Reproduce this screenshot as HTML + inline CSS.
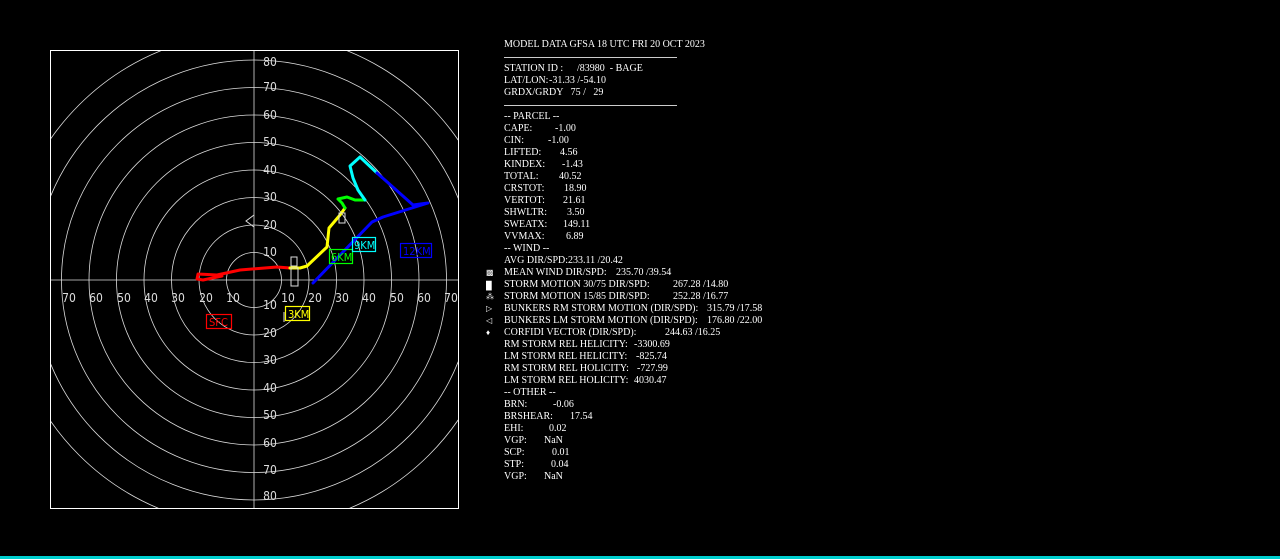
<!DOCTYPE html>
<html><head><meta charset="utf-8"><style>
body{margin:0;background:#000;width:1280px;height:559px;overflow:hidden;position:relative}
.t{position:absolute;font:10px/12px "Liberation Serif",serif;color:#fff;white-space:pre}
.bar{position:absolute;left:0;top:556px;width:1280px;height:3px;background:#00d0d0}
</style></head><body>
<svg width="1280" height="559" style="position:absolute;left:0;top:0">
<defs><clipPath id="c"><rect x="51" y="51" width="407" height="457"/></clipPath></defs>
<rect x="50.5" y="50.5" width="408" height="458" fill="none" stroke="#fff"/>
<g clip-path="url(#c)" fill="none" stroke="#ddd" stroke-width="0.8">
<circle cx="254" cy="280" r="27.5"/><circle cx="254" cy="280" r="55"/><circle cx="254" cy="280" r="82.5"/><circle cx="254" cy="280" r="110"/><circle cx="254" cy="280" r="137.5"/><circle cx="254" cy="280" r="165"/><circle cx="254" cy="280" r="192.5"/><circle cx="254" cy="280" r="220"/><circle cx="254" cy="280" r="247.5"/>
<line x1="254" y1="50" x2="254" y2="509"/><line x1="50" y1="280" x2="459" y2="280"/>
</g>
<g font-family="DejaVu Sans Condensed,Liberation Sans,sans-serif" font-size="12" fill="#ddd" text-anchor="middle">
<text x="69" y="302">70</text><text x="96" y="302">60</text><text x="124" y="302">50</text><text x="151" y="302">40</text><text x="178" y="302">30</text><text x="206" y="302">20</text><text x="233" y="302">10</text>
<text x="288" y="302">10</text><text x="315" y="302">20</text><text x="342" y="302">30</text><text x="369" y="302">40</text><text x="397" y="302">50</text><text x="424" y="302">60</text><text x="451" y="302">70</text>
<text x="270" y="256">10</text><text x="270" y="229">20</text><text x="270" y="201">30</text><text x="270" y="174">40</text><text x="270" y="146">50</text><text x="270" y="119">60</text><text x="270" y="91">70</text><text x="270" y="66">80</text>
<text x="270" y="309">10</text><text x="270" y="337">20</text><text x="270" y="364">30</text><text x="270" y="392">40</text><text x="270" y="419">50</text><text x="270" y="447">60</text><text x="270" y="474">70</text><text x="270" y="500">80</text>
</g>
<g fill="none" stroke-width="3" stroke-linejoin="round" stroke-linecap="round">
<polyline stroke="#f00" points="290,268 277,267 240,270 217,275 198,274 197,279 203,280 222,276"/>
<polyline stroke="#ff0" points="290,268 300,268 307,266 327,247 329,228 340,215 345,208"/>
<polyline stroke="#0f0" points="345,208 342,203 338,199 347,197 355,200 365,200"/>
<polyline stroke="#0ff" points="365,200 358,190 353,178 350,166 360,157 377,173"/>
<polyline stroke="#00f" points="377,173 413,205 428,203 383,217 372,222 313,283"/>
</g>
<g fill="none" stroke-width="1.2" font-family="DejaVu Sans Condensed,Liberation Sans,sans-serif" font-size="11">
<rect x="206.5" y="314.5" width="25" height="14" stroke="#f00"/><text x="209" y="326" fill="#f00" stroke="none">SFC</text>
<rect x="285.5" y="306.5" width="24" height="14" stroke="#ff0"/><text x="288" y="318" fill="#ff0" stroke="none">3KM</text>
<rect x="329.5" y="249.5" width="23" height="14" stroke="#0f0"/><text x="331" y="261" fill="#0f0" stroke="none">6KM</text>
<rect x="352.5" y="237.5" width="23" height="14" stroke="#0ff"/><text x="354" y="249" fill="#0ff" stroke="none">9KM</text>
<rect x="400.5" y="243.5" width="31" height="14" stroke="#00f"/><text x="403" y="255" fill="#00f" stroke="none">12KM</text>
</g>
<g fill="none" stroke="#ddd" stroke-width="1">
<rect x="291" y="268" width="7" height="18"/><rect x="291" y="257" width="6" height="9"/><rect x="339" y="213" width="6" height="10"/>
<path d="M254 215 L246 221 L254 227"/><path d="M284 312 L284 322"/>
</g>
</svg>
<div style="position:absolute;left:0;top:3px;width:1280px;height:540px">
<div class="t" style="left:504px;top:36px">MODEL DATA GFSA 18 UTC FRI 20 OCT 2023</div>
<div style="position:absolute;left:504px;top:54px;width:173px;height:1px;background:#ccc"></div>
<div class="t" style="left:504px;top:60px">STATION ID :</div><div class="t" style="left:577px;top:60px">/83980  - BAGE</div>
<div class="t" style="left:504px;top:72px">LAT/LON:</div><div class="t" style="left:549px;top:72px">-31.33 /-54.10</div>
<div class="t" style="left:504px;top:84px">GRDX/GRDY   75 /   29</div>
<div style="position:absolute;left:504px;top:102px;width:173px;height:1px;background:#ccc"></div>
<div class="t" style="left:504px;top:108px">-- PARCEL --</div>
<div class="t" style="left:504px;top:120px">CAPE:</div><div class="t" style="left:555px;top:120px">-1.00</div>
<div class="t" style="left:504px;top:132px">CIN:</div><div class="t" style="left:548px;top:132px">-1.00</div>
<div class="t" style="left:504px;top:144px">LIFTED:</div><div class="t" style="left:560px;top:144px">4.56</div>
<div class="t" style="left:504px;top:156px">KINDEX:</div><div class="t" style="left:562px;top:156px">-1.43</div>
<div class="t" style="left:504px;top:168px">TOTAL:</div><div class="t" style="left:559px;top:168px">40.52</div>
<div class="t" style="left:504px;top:180px">CRSTOT:</div><div class="t" style="left:564px;top:180px">18.90</div>
<div class="t" style="left:504px;top:192px">VERTOT:</div><div class="t" style="left:563px;top:192px">21.61</div>
<div class="t" style="left:504px;top:204px">SHWLTR:</div><div class="t" style="left:567px;top:204px">3.50</div>
<div class="t" style="left:504px;top:216px">SWEATX:</div><div class="t" style="left:563px;top:216px">149.11</div>
<div class="t" style="left:504px;top:228px">VVMAX:</div><div class="t" style="left:566px;top:228px">6.89</div>
<div class="t" style="left:504px;top:240px">-- WIND --</div>
<div class="t" style="left:504px;top:252px">AVG DIR/SPD:</div><div class="t" style="left:568px;top:252px">233.11 /20.42</div>
<div class="t" style="left:486px;top:264px;font-size:8px">&#9641;</div><div class="t" style="left:504px;top:264px">MEAN WIND DIR/SPD:</div><div class="t" style="left:616px;top:264px">235.70 /39.54</div>
<div class="t" style="left:486px;top:264px;font-size:8px;top:277px">&#9608;</div><div class="t" style="left:504px;top:276px">STORM MOTION 30/75 DIR/SPD:</div><div class="t" style="left:673px;top:276px">267.28 /14.80</div>
<div class="t" style="left:486px;top:288px;font-size:8px">&#8258;</div><div class="t" style="left:504px;top:288px">STORM MOTION 15/85 DIR/SPD:</div><div class="t" style="left:673px;top:288px">252.28 /16.77</div>
<div class="t" style="left:486px;top:300px;font-size:8px">&#9655;</div><div class="t" style="left:504px;top:300px">BUNKERS RM STORM MOTION (DIR/SPD):</div><div class="t" style="left:707px;top:300px">315.79 /17.58</div>
<div class="t" style="left:486px;top:312px;font-size:8px">&#9665;</div><div class="t" style="left:504px;top:312px">BUNKERS LM STORM MOTION (DIR/SPD):</div><div class="t" style="left:707px;top:312px">176.80 /22.00</div>
<div class="t" style="left:486px;top:324px;font-size:8px">&#9830;</div><div class="t" style="left:504px;top:324px">CORFIDI VECTOR (DIR/SPD):</div><div class="t" style="left:665px;top:324px">244.63 /16.25</div>
<div class="t" style="left:504px;top:336px">RM STORM REL HELICITY:</div><div class="t" style="left:634px;top:336px">-3300.69</div>
<div class="t" style="left:504px;top:348px">LM STORM REL HELICITY:</div><div class="t" style="left:636px;top:348px">-825.74</div>
<div class="t" style="left:504px;top:360px">RM STORM REL HOLICITY:</div><div class="t" style="left:637px;top:360px">-727.99</div>
<div class="t" style="left:504px;top:372px">LM STORM REL HOLICITY:</div><div class="t" style="left:634px;top:372px">4030.47</div>
<div class="t" style="left:504px;top:384px">-- OTHER --</div>
<div class="t" style="left:504px;top:396px">BRN:</div><div class="t" style="left:553px;top:396px">-0.06</div>
<div class="t" style="left:504px;top:408px">BRSHEAR:</div><div class="t" style="left:570px;top:408px">17.54</div>
<div class="t" style="left:504px;top:420px">EHI:</div><div class="t" style="left:549px;top:420px">0.02</div>
<div class="t" style="left:504px;top:432px">VGP:</div><div class="t" style="left:544px;top:432px">NaN</div>
<div class="t" style="left:504px;top:444px">SCP:</div><div class="t" style="left:552px;top:444px">0.01</div>
<div class="t" style="left:504px;top:456px">STP:</div><div class="t" style="left:551px;top:456px">0.04</div>
<div class="t" style="left:504px;top:468px">VGP:</div><div class="t" style="left:544px;top:468px">NaN</div>
</div>
<div class="bar"></div>
</body></html>
